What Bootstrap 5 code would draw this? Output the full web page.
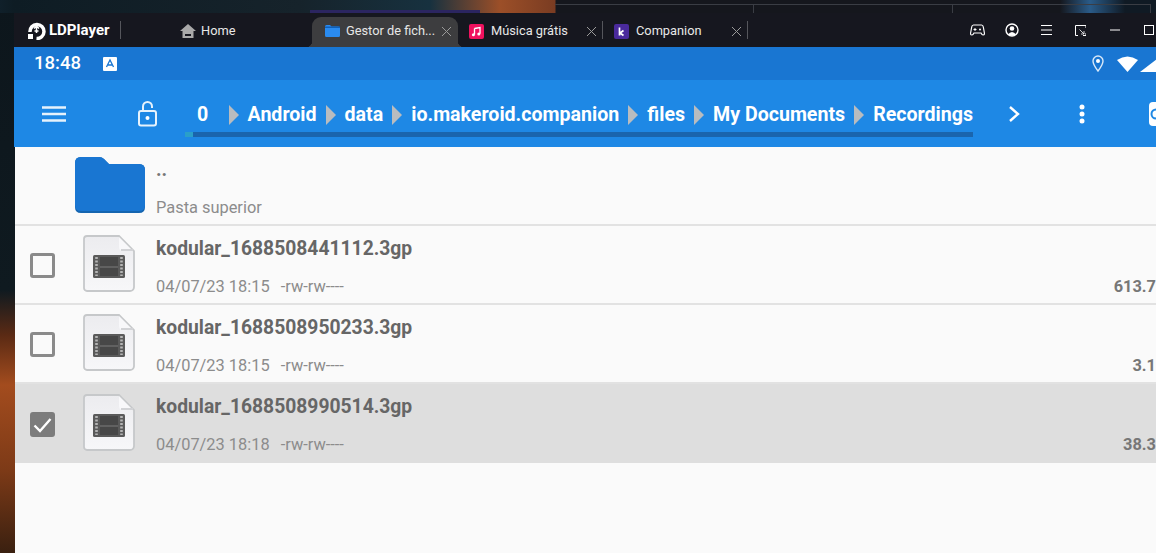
<!DOCTYPE html>
<html lang="pt">
<head>
<meta charset="utf-8">
<title>LDPlayer</title>
<link href="https://cdn.jsdelivr.net/npm/bootstrap@5.3.0/dist/css/bootstrap.min.css" rel="stylesheet">
<style>
html,body{height:100%}
body{overflow:hidden;font-family:Roboto,sans-serif;
 background:
 linear-gradient(#3a3d44,#3a3d44) 555px 4px/595px 1px no-repeat,
 linear-gradient(#3a3d44,#3a3d44) 753px 4px/1px 9px no-repeat,
 linear-gradient(#3a3d44,#3a3d44) 952px 4px/1px 9px no-repeat,
 linear-gradient(#3a3d44,#3a3d44) 1150px 4px/1px 9px no-repeat,
 linear-gradient(90deg,transparent 310px,#2b2560 310px,#2b2560 480px,transparent 480px) 0 10px/100% 3px no-repeat,
 linear-gradient(90deg,#10202a 0,#0e1c24 14px,#16232b 300px,#17313f 430px,#9c4f28 500px,#7a3c22 555px,#15171d 556px,#15171d 1060px,#2a5b88 1090px,#101a24 1125px) 0 0/100% 13px no-repeat,
 linear-gradient(180deg,#0d161c 0,#0f1a20 290px,#5a2a14 335px,#a34c1e 385px,#7d3a17 470px,#3a2010 553px) 0 0/15px 100% no-repeat,
 #0e1a20}
.app-win{margin:13px 0 0 15px;height:540px;display:flex;flex-direction:column;background:#fafafa}
.title-bar{height:34px;flex:none;background:#16171f;color:#e8e8e8;font-size:12.8px;margin-left:-1px}
.ld-logo{margin-left:13px;width:93px;gap:3px}
.ld-name{font:700 15px Roboto,sans-serif;color:#fff}
.ld-sep{width:1px;height:18px;background:#55565c}
.tab-item{height:30px;margin-top:4px;padding-bottom:2px;gap:7px;flex:none}
.home-tab{margin-left:59px;width:132px;gap:5px}
.tab-on{width:146px;padding-left:13px;gap:6px;background:#3d3d3f;border-radius:9px 9px 0 0;color:#e6e6e6;position:relative}
.tab-on::before,.tab-on::after{content:"";position:absolute;bottom:0;width:6px;height:6px}
.tab-on::before{left:-6px;background:radial-gradient(circle at 0 0,transparent 6px,#3d3d3f 6.5px)}
.tab-on::after{right:-6px;background:radial-gradient(circle at 100% 0,transparent 6px,#3d3d3f 6.5px)}
.tab-plain{width:144px;padding-left:11px}
.tab-label{white-space:nowrap;line-height:1}
.tab-close{width:11px;height:11px;flex:none;margin-left:auto}
.tab-on .tab-close{margin-right:6.500px}
.tab-plain .tab-close{margin-right:5.500px}
.tab-rule{width:1px;height:18px;background:#55565c;flex:none;margin-top:8px}
.win-tools{margin-left:auto;margin-right:-10px}
.tool-slot{width:34.2px;display:flex;justify-content:center;flex:none}
.status-bar{height:33px;flex:none;background:#1976d2;color:#fff;padding-left:20px;margin-left:-1px}
.clock{font-weight:500;font-size:18.5px;line-height:1;width:69px}
.status-right{margin-left:auto;margin-right:-5px}
.status-pin{margin-right:13px}
.status-wifi{margin-right:2px}
.tool-bar{height:67px;flex:none;background:#1e88e5;color:#fff;margin-left:-1px}
.menu-btn{margin-left:28px;width:95px;flex:none}
.lock-btn{width:48px;flex:none}
.crumb-zone{width:788px;flex:none;height:100%;padding-top:22px}
.crumb-line{font-weight:700;font-size:19.6px;line-height:24px;white-space:nowrap;gap:9px;padding-left:12px;height:26px}
.crumb-zero{width:24px}
.crumb-arrow{width:10px;height:20px;flex:none}
.crumb-track{height:5px;background:#1a65ad;margin-top:4px}
.crumb-fill{display:block;width:8px;height:5px;background:#2a9fc9}
.more-btn{width:82px;flex:none;text-align:center}
.dots-btn{width:54px;flex:none}
.edge-btn{margin-left:auto;flex:none}
.file-list{flex:1;background:#fafafa;color:#666}
.file-row{display:flex;align-items:stretch;height:79px;border-bottom:2px solid #e2e2e2}
.row-picked{background:#dedede;border-bottom:0}
.check-col{width:60px;flex:none;display:flex;align-items:center;padding-left:15px}
.check-box{width:25px;height:25px;margin-top:2px;border:3px solid #8a8a8a;border-radius:3px;display:flex;align-items:center;justify-content:center}
.check-on{background:#7c7c7c;border-color:#7c7c7c}
.icon-col{width:81px;flex:none;display:flex;align-items:center;padding-left:8px}
.icon-col svg{margin-top:-2px}
.icon-folder{width:141px;padding-left:60px}
.text-col{flex:1;min-width:0;display:flex;flex-direction:column;padding-top:12px}
.file-name{font-weight:700;font-size:19.3px;line-height:22px;color:#666;white-space:nowrap}
.parent-name{color:#777}
.file-meta{display:flex;font-size:16.4px;line-height:20px;color:#8c8c8c;margin-top:17px;white-space:nowrap}
.meta-perm{margin-left:11px}
.file-size{margin-left:auto;font-weight:700;color:#777;text-align:right}
</style>
</head>
<body>
<svg width="0" height="0" class="d-block position-absolute">
 <defs>
  <linearGradient id="pageFill" x1="0" y1="0" x2="0" y2="1"><stop offset="0" stop-color="#ececef"/><stop offset="1" stop-color="#f7f7f9"/></linearGradient>
  <symbol id="fileIcon" viewBox="0 0 52 57">
   <path d="M4 1h32l15 15v36a4 4 0 0 1-4 4H4a3 3 0 0 1-3-3V4a3 3 0 0 1 3-3z" fill="url(#pageFill)" stroke="#c6c8ca" stroke-width="1.800"/>
   <path d="M36 2v10a4 4 0 0 0 4 4h10z" fill="#f8f8fa"/>
   <path d="M38 15h12" stroke="#d2d3d6" stroke-width="2"/>
   <rect x="10" y="20" width="32" height="23" rx="1.500" fill="#5a5a5a"/>
   <rect x="17" y="22" width="18" height="19" fill="#474747"/>
   <path d="M17 32h18" stroke="#8a8a8a" stroke-width=".8"/>
   <path d="M13.500 22v19M38.500 22v19" stroke="#b5b5b5" stroke-width="2.600" stroke-dasharray="2 1.500"/>
  </symbol>
  <symbol id="crumbArrow" viewBox="0 0 10 20"><path d="M0 0 10 10 0 20z" fill="#b9bcbf"/></symbol>
  <symbol id="tabX" viewBox="0 0 11 11"><path d="M1 1l9 9M10 1l-9 9" stroke="#9a9a9a" stroke-width="1"/></symbol>
 </defs>
</svg>
<div class="app-win">
 <div class="title-bar d-flex">
  <div class="ld-logo d-flex align-items-center flex-shrink-0">
   <svg width="19" height="19" viewBox="0 0 19 19" class="flex-shrink-0"><path d="M3 11a7 7 0 1 1 6.500 6.500" fill="none" stroke="#fff" stroke-width="3.500"/><path d="M1 13h5v5H1z" fill="#fff"/><path d="M9.500 5v7M7 7.500l2.500-2.500 2.500 2.500M7.500 10h4" fill="none" stroke="#fff" stroke-width="1.500"/></svg>
   <span class="ld-name">LDPlayer</span>
  </div>
  <div class="ld-sep align-self-center"></div>
  <div class="tab-item home-tab d-flex align-items-center">
   <svg width="16" height="14" viewBox="0 0 16 14" class="flex-shrink-0"><path d="M8 0 16 7h-2.500v7h-11V7H0z" fill="#a9a9a9"/><rect x="5" y="10" width="6" height="2" fill="#16171f"/></svg>
   <span class="tab-label">Home</span>
  </div>
  <div class="tab-item tab-on d-flex align-items-center">
   <svg width="15" height="12" viewBox="0 0 15 12" class="flex-shrink-0"><path d="M0 1.500Q0 0 1.500 0H5l1.500 1.500h7Q15 1.500 15 3v7.500Q15 12 13.500 12h-12Q0 12 0 10.500z" fill="#2a8bf0"/><rect y="1.500" width="15" height="1.500" fill="#0f5fb8"/></svg>
   <span class="tab-label">Gestor de fich...</span>
   <svg class="tab-close"><use href="#tabX"/></svg>
  </div>
  <div class="tab-item tab-plain d-flex align-items-center">
   <svg width="15" height="15" viewBox="0 0 15 15" class="flex-shrink-0"><rect width="15" height="15" rx="2" fill="#f0115e"/><path d="M5.500 4.500 11 3.500v6.300M5.500 4.500v6" fill="none" stroke="#fff" stroke-width="1.300"/><circle cx="4.400" cy="10.800" r="1.500" fill="#fff"/><circle cx="9.800" cy="10" r="1.500" fill="#fff"/></svg>
   <span class="tab-label">Música grátis</span>
   <svg class="tab-close"><use href="#tabX"/></svg>
  </div>
  <div class="tab-rule"></div>
  <div class="tab-item tab-plain d-flex align-items-center">
   <svg width="15" height="15" viewBox="0 0 15 15" class="flex-shrink-0"><rect width="15" height="15" rx="2" fill="#4a2a9c"/><path d="M5.500 3.500v8M9.500 6.500 6 9l3.500 2.500" fill="none" stroke="#fff" stroke-width="1.700"/></svg>
   <span class="tab-label">Companion</span>
   <svg class="tab-close"><use href="#tabX"/></svg>
  </div>
  <div class="tab-rule"></div>
  <div class="win-tools d-flex align-items-center">
   <div class="tool-slot"><svg width="15" height="12" viewBox="0 0 15 12"><path d="M3.500 1h8Q13 1 13.300 3l1.200 6.500Q14.500 11 13 11 12 11 11 9H4Q3 11 2 11 .5 11 .5 9.500L1.700 3Q2 1 3.500 1z" fill="none" stroke="#fff" stroke-width="1.200"/><path d="M3.500 5.500h3M5 4v3" stroke="#fff" stroke-width="1"/><circle cx="10" cy="5.500" r="1" fill="#fff"/></svg></div>
   <div class="tool-slot"><svg width="14" height="14" viewBox="0 0 14 14"><circle cx="7" cy="7" r="6" fill="none" stroke="#fff" stroke-width="1.400"/><circle cx="7" cy="5.500" r="2.300" fill="#fff"/><path d="M2.800 11.500Q7 6.500 11.200 11.500 7 14 2.800 11.500z" fill="#fff"/></svg></div>
   <div class="tool-slot"><svg width="11" height="10" viewBox="0 0 11 10"><path d="M0 .5h11M0 5h11M0 9.500h11" stroke="#fff" stroke-width="1"/></svg></div>
   <div class="tool-slot"><svg width="11" height="11" viewBox="0 0 11 11"><path d="M11 3V.5H.5v10H3M8 10.500h3V8" fill="none" stroke="#fff" stroke-width="1"/><path d="M4.500 4.500 9 9M9 6v3H6" fill="none" stroke="#fff" stroke-width=".8"/></svg></div>
   <div class="tool-slot"><svg width="10" height="2" viewBox="0 0 10 2"><path d="M0 1h10" stroke="#fff" stroke-width="1"/></svg></div>
   <div class="tool-slot"><svg width="10" height="10" viewBox="0 0 10 10"><rect x=".5" y=".5" width="9" height="9" fill="none" stroke="#fff"/></svg></div>
  </div>
 </div>
 <div class="status-bar d-flex align-items-center">
  <span class="clock">18:48</span>
  <svg width="14" height="14" viewBox="0 0 14 14"><rect width="14" height="14" rx="1" fill="#fff"/><path d="M3.500 10 7 3l3.500 7M5 8h4" fill="none" stroke="#1976d2" stroke-width="1.300"/></svg>
  <div class="status-right d-flex align-items-center">
   <svg width="12" height="17" viewBox="0 0 12 17" class="status-pin"><path d="M6 1a5 5 0 0 0-5 5q0 3.500 5 10 5-6.500 5-10a5 5 0 0 0-5-5z" fill="none" stroke="#d8e8f8" stroke-width="1.400"/><circle cx="6" cy="6" r="2" fill="#fff"/></svg>
   <svg width="21" height="16" viewBox="0 0 21 16" class="status-wifi"><path d="M0 4Q10.500-3 21 4L10.500 16z" fill="#fff"/></svg>
   <svg width="21" height="16" viewBox="0 0 21 16"><path d="M21 0v16H0z" fill="#fff"/></svg>
  </div>
 </div>
 <div class="tool-bar d-flex align-items-center">
  <div class="menu-btn"><svg width="24" height="16" viewBox="0 0 24 16" class="d-block"><path d="M0 1.500h24M0 8h24M0 14.500h24" stroke="#e6f2fc" stroke-width="2.400"/></svg></div>
  <div class="lock-btn"><svg width="21" height="26" viewBox="0 0 21 26" class="d-block"><path d="M6 10V5.500a4.500 4.500 0 0 1 9 0V7" fill="none" stroke="#e6f2fc" stroke-width="2"/><rect x="2" y="10" width="17" height="14.500" rx="2" fill="none" stroke="#e6f2fc" stroke-width="2"/><circle cx="10.500" cy="17" r="2" fill="#fff"/></svg></div>
  <div class="crumb-zone">
   <div class="crumb-line d-flex align-items-center">
    <span class="crumb-zero">0</span>
    <svg class="crumb-arrow"><use href="#crumbArrow"/></svg>
    <span>Android</span>
    <svg class="crumb-arrow"><use href="#crumbArrow"/></svg>
    <span>data</span>
    <svg class="crumb-arrow"><use href="#crumbArrow"/></svg>
    <span>io.makeroid.companion</span>
    <svg class="crumb-arrow"><use href="#crumbArrow"/></svg>
    <span>files</span>
    <svg class="crumb-arrow"><use href="#crumbArrow"/></svg>
    <span>My Documents</span>
    <svg class="crumb-arrow"><use href="#crumbArrow"/></svg>
    <span>Recordings</span>
   </div>
   <div class="crumb-track"><span class="crumb-fill"></span></div>
  </div>
  <div class="more-btn"><svg width="12" height="18" viewBox="0 0 12 18"><path d="M2 2l8 7-8 7" fill="none" stroke="#fff" stroke-width="2.400"/></svg></div>
  <div class="dots-btn"><svg width="6" height="20" viewBox="0 0 6 20" class="d-block mx-auto"><circle cx="3" cy="3" r="2.500" fill="#fff"/><circle cx="3" cy="10" r="2.500" fill="#fff"/><circle cx="3" cy="17" r="2.500" fill="#fff"/></svg></div>
  <svg class="edge-btn" width="7" height="24" viewBox="0 0 7 24"><path d="M7 0H4Q0 0 0 4v16q0 4 4 4h3z" fill="#fff"/><path d="M7 7.500a4.500 4.500 0 0 0 0 9" fill="none" stroke="#1e88e5" stroke-width="2"/></svg>
 </div>
 <div class="file-list">
  <div class="file-row">
   <div class="icon-col icon-folder">
    <svg width="70" height="56" viewBox="0 0 70 56" class="flex-shrink-0"><path d="M0 6q0-6 6-6h18q3 0 5 2l5 5h30q6 0 6 6v37q0 6-6 6H6q-6 0-6-6z" fill="#1565b0"/><path d="M0 6q0-6 6-6h18q3 0 5 2l5 5h30q6 0 6 6v35q0 6-6 6H6q-6 0-6-6z" fill="#1976d2"/></svg>
   </div>
   <div class="text-col">
    <div class="file-name parent-name">..</div>
    <div class="file-meta"><span>Pasta superior</span></div>
   </div>
  </div>
  <div class="file-row">
   <div class="check-col"><span class="check-box"></span></div>
   <div class="icon-col"><svg width="52" height="57" class="flex-shrink-0"><use href="#fileIcon"/></svg></div>
   <div class="text-col">
    <div class="file-name">kodular_1688508441112.3gp</div>
    <div class="file-meta"><span>04/07/23 18:15</span><span class="meta-perm">-rw-rw----</span><span class="file-size">613.7</span></div>
   </div>
  </div>
  <div class="file-row">
   <div class="check-col"><span class="check-box"></span></div>
   <div class="icon-col"><svg width="52" height="57" class="flex-shrink-0"><use href="#fileIcon"/></svg></div>
   <div class="text-col">
    <div class="file-name">kodular_1688508950233.3gp</div>
    <div class="file-meta"><span>04/07/23 18:15</span><span class="meta-perm">-rw-rw----</span><span class="file-size">3.1</span></div>
   </div>
  </div>
  <div class="file-row row-picked">
   <div class="check-col"><span class="check-box check-on"><svg width="19" height="16" viewBox="0 0 19 16"><path d="M1.500 8.500 7 14 17.500 2" fill="none" stroke="#fff" stroke-width="2.400"/></svg></span></div>
   <div class="icon-col"><svg width="52" height="57" class="flex-shrink-0"><use href="#fileIcon"/></svg></div>
   <div class="text-col">
    <div class="file-name">kodular_1688508990514.3gp</div>
    <div class="file-meta"><span>04/07/23 18:18</span><span class="meta-perm">-rw-rw----</span><span class="file-size">38.3</span></div>
   </div>
  </div>
 </div>
</div>
</body>
</html>
